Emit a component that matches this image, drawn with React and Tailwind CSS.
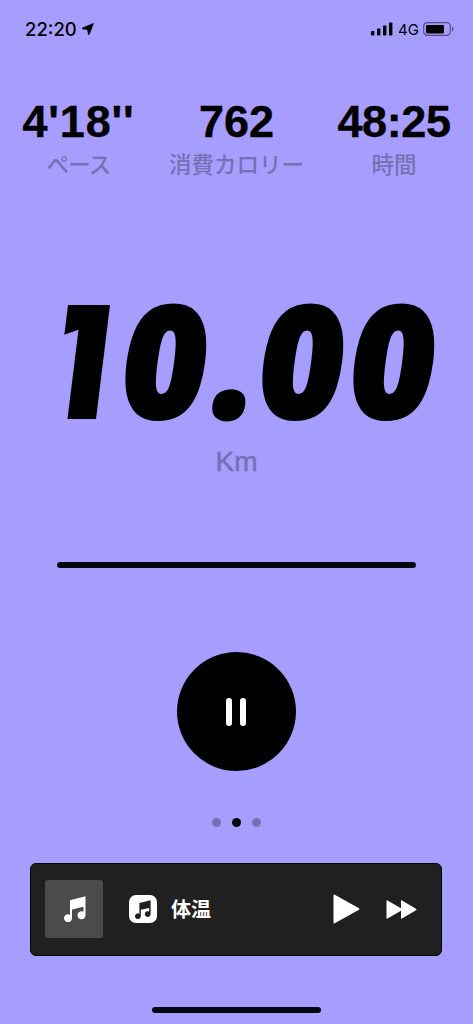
import React from 'react'

const stats = [
  { value: "4'18''", label: 'ペース', box: 'w-[157px]', valueClass: 'tracking-[0.8px]', labelClass: 'tracking-[-0.8px]' },
  { value: '762', label: '消費カロリー', box: 'w-[159px]', valueClass: '', labelClass: '' },
  { value: '48:25', label: '時間', box: 'w-[156px]', valueClass: 'tracking-[-0.4px]', labelClass: '' },
]

// Everything after the leading 1, each in a cell of its own
const digits = [
  { char: '0', cell: 'w-[91px]' },
  { char: '.', cell: 'w-[46px]' },
  { char: '0', cell: 'w-[91px]' },
  { char: '0', cell: 'w-[91px]' },
]

const NoteIcon = ({ className }) => (
  <svg viewBox="0 0 22 26" className={className} fill="currentColor">
    <path d="M6 4.2 21.5 0.3V19a4 4 0 1 1-2-3.2V10.8L8 13.4V22a4 4 0 1 1-2-3.3Z" />
  </svg>
)

const StatusBar = () => (
  <div className="flex h-[58px] items-center justify-between pl-[25px] pr-[18px]">
    <div className="flex items-center gap-[6px]">
      <span className="w-[51px] whitespace-nowrap font-['Inter',sans-serif] text-[18.5px] font-medium leading-none">22:20</span>
      <svg viewBox="0 0 12 12" className="h-3 w-3" fill="currentColor" stroke="currentColor" strokeWidth="0.8">
        <path d="M11.5 0.5 7.1 11.4c-.2.5-.6.5-.7-.1L5.6 6.4.6 5.8c-.5 0-.5-.6-.1-.8Z" />
      </svg>
    </div>
    <div className="flex items-center">
      <svg viewBox="0 0 22 14" className="h-[14px] w-[22px]" fill="currentColor">
        <rect x="0" y="9" width="3.4" height="4.5" rx="0.8" />
        <rect x="6" y="6.5" width="3.4" height="7" rx="0.8" />
        <rect x="12" y="3.5" width="3.4" height="10" rx="0.8" />
        <rect x="18" y="0.5" width="3.4" height="13" rx="0.8" />
      </svg>
      <span className="ml-[5px] w-[21px] font-['Inter',sans-serif] text-[15px] leading-none">4G</span>
      <svg viewBox="0 0 32 14" className="ml-[4px] h-[14px] w-8">
        <rect x="0.7" y="0.7" width="26.6" height="12.6" rx="3.6" fill="none" stroke="#000" strokeOpacity="0.5" strokeWidth="1.2" />
        <rect x="3" y="3" width="18" height="8.5" rx="1.2" />
        <path d="M29 4.5c2 .8 2 4.2 0 5Z" fillOpacity="0.5" />
      </svg>
    </div>
  </div>
)

const App = () => {
  return (
    <div className="flex h-[1024px] w-[473px] flex-col overflow-hidden bg-[#a79dff] text-black">
      <StatusBar />

      {/* Run stats */}
      <div className="flex h-[142px] pt-[42px]">
        {stats.map((stat) => (
          <div key={stat.label} className={`flex flex-col items-center ${stat.box}`}>
            <span className={`whitespace-nowrap font-['Liberation_Sans',sans-serif] text-[45px] font-bold leading-[44px] [-webkit-text-stroke:0.4px_#000] ${stat.valueClass}`}>
              {stat.value}
            </span>
            <span className={`mt-[3px] font-['Noto_Sans_CJK_JP',sans-serif] text-[22.5px] font-medium leading-8 text-[#7770b3] ${stat.labelClass}`}>
              {stat.label}
            </span>
          </div>
        ))}
      </div>

      {/* Distance */}
      <div className="flex h-[240px] items-center pl-[61px] pt-[84px]">
        {/* The 1 is trimmed by its box so that its flag ends flat */}
        <span className="mr-[18px] flex h-[114px] w-[42px] -skew-x-[7deg] justify-end overflow-hidden">
          <span className="-mt-1 mr-[-22px] origin-right scale-x-[0.79] font-['Roboto',sans-serif] text-[180px] font-black leading-[114px] [-webkit-text-stroke:8px_#000]">
            1
          </span>
        </span>
        {digits.map((digit, i) => (
          <span
            key={i}
            className={`mb-[8px] flex -skew-x-[8deg] scale-x-[0.94] justify-center font-['Open_Sans',sans-serif] text-[156px] font-extrabold leading-[114px] [-webkit-text-stroke:3px_#000] ${digit.cell}`}
          >
            {digit.char}
          </span>
        ))}
      </div>
      <div className="h-[122px] pt-[2px] text-center font-['Liberation_Sans',sans-serif] text-[28px] leading-10 text-[#7770b3] [-webkit-text-stroke:0.5px_#7770b3]">Km</div>
      <div className="mx-[57px] h-[6px] shrink-0 rounded-full bg-[#08070f]" />

      {/* Controls */}
      <div className="flex flex-col items-center pt-[84px]">
        <button className="flex h-[119px] w-[119px] items-center justify-center gap-2 rounded-full bg-black pr-px">
          <span className="h-7 w-[6px] rounded-sm bg-white" />
          <span className="h-7 w-[6px] rounded-sm bg-white" />
        </button>
        <div className="mt-[47px] flex gap-[11px]">
          <span className="h-[9px] w-[9px] rounded-full bg-[#7770b3]" />
          <span className="h-[9px] w-[9px] rounded-full bg-black" />
          <span className="h-[9px] w-[9px] rounded-full bg-[#7770b3]" />
        </div>
      </div>

      {/* Music player */}
      <div className="ml-[30px] mt-9 flex h-[93px] w-[412px] shrink-0 items-center rounded-md border border-black bg-[#202020] pb-px pl-[14px] pr-6 text-white">
        <div className="flex h-[58px] w-[58px] items-center justify-center rounded-[3px] bg-[#4b4b4b] pl-[2px]">
          <NoteIcon className="h-[26px] w-[22px]" />
        </div>
        <div className="ml-[26px] flex h-7 w-7 items-center justify-center rounded-[7px] bg-white text-[#202020]">
          <NoteIcon className="h-[19px] w-[16px]" />
        </div>
        <span className="ml-[14px] font-['Noto_Sans_CJK_JP',sans-serif] text-[20px] font-bold leading-7">体温</span>
        <svg viewBox="0 0 27 30" className="ml-auto h-[30px] w-[27px]" fill="currentColor">
          <path d="M.5 1.8Q.5 0 2.2.9L26 14.2q1 .8 0 1.6L2.2 29.1Q.5 30 .5 28.2Z" />
        </svg>
        <svg viewBox="0 0 31 19" className="ml-[26px] h-[19px] w-[31px]" fill="currentColor">
          <path d="M.5 1Q.5 0 1.5.5L15 8.2V1q0-1 1-.5l14 8.3q1 .7 0 1.4l-14 8.3q-1 .5-1-.5v-7.2L1.5 18.5Q.5 19 .5 18Z" />
        </svg>
      </div>

      <div className="mx-auto mt-[51px] h-[6px] w-[169px] shrink-0 rounded-full bg-[#08070f]" />
    </div>
  )
}

export default App
